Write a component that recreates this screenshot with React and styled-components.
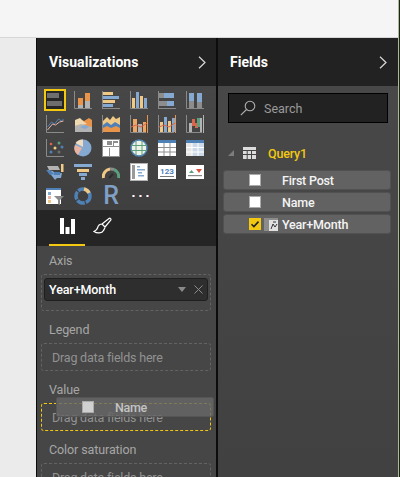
import React from 'react'
import styled, { createGlobalStyle } from 'styled-components'

const Global = createGlobalStyle`
  html, body { margin: 0; padding: 0; background: #ececec; }
  body { width: 400px; height: 477px; overflow: hidden; font-family: Roboto, "Liberation Sans", sans-serif; }
`

const Page = styled.div`
  width: 400px;
  height: 477px;
  display: flex;
  overflow: hidden;
`
const Workspace = styled.div`
  width: 398px;
  flex: none;
  display: flex;
  flex-direction: column;
`
const EdgeStrip = styled.div`
  flex: 1;
  background: #1e241a;
  border-left: 1px solid #a8bb92;
`
const TopBar = styled.div`
  height: 37px;
  flex: none;
  background: #f5f5f5;
  border-bottom: 1px solid #d6d6d6;
`
const Main = styled.div`
  flex: 1;
  display: flex;
  min-height: 0;
`
const LeftGap = styled.div`
  width: 36px;
  flex: none;
  background: #ebebeb;
`
const Pane = styled.section`
  width: ${({ w }) => w}px;
  flex: none;
  display: flex;
  flex-direction: column;
  background: #464646;
  border-left: ${({ edge }) => edge}px solid #0c0c0c;
`
const PaneHeader = styled.header`
  height: 48px;
  flex: none;
  display: flex;
  align-items: center;
  justify-content: space-between;
  padding: 0 ${({ padRight }) => padRight}px 0 12px;
  background: #222222;
  color: #fff;
  font-size: 14px;
  font-weight: 700;
  letter-spacing: 0.05px;
`
const Chevron = styled.svg`
  width: 8px;
  height: 13px;
  fill: none;
  stroke: #d9d9d9;
  stroke-width: 1.2;
`
const Gallery = styled.div`
  height: 124px;
  flex: none;
  display: grid;
  grid-template-columns: repeat(6, 28px);
  grid-auto-rows: 24px;
  padding: 3px 0 0 7px;
  box-sizing: border-box;
  background: linear-gradient(#474747, #3f3f3f);
`
const Cell = styled.div`
  width: 22px;
  height: 22px;
  display: flex;
  align-items: center;
  justify-content: center;
  box-sizing: border-box;
  ${({ active }) => active && 'border: 2px solid #f2c811; background: #262626;'}
`
const Glyph = styled.svg`
  width: 18px;
  height: ${({ h }) => h || 18}px;
  display: block;
`
const TabBar = styled.div`
  height: 36px;
  flex: none;
  display: flex;
  padding-left: 12px;
  background: #252525;
`
const Tab = styled.div`
  width: 36px;
  height: 36px;
  box-sizing: border-box;
  display: flex;
  align-items: center;
  justify-content: center;
  padding-bottom: 3px;
  border-bottom: 2px solid ${({ active }) => (active ? '#f2c811' : 'transparent')};
`
const Wells = styled.div`
  position: relative;
  flex: 1;
  padding: 6px 5px 0 4px;
  min-height: 0;
  overflow: hidden;
`
const WellLabel = styled.div`
  height: 22px;
  line-height: 18px;
  padding-left: 8px;
  font-size: 12.5px;
  letter-spacing: -0.1px;
  color: #a6a6a6;
`
const Well = styled.div`
  height: ${({ h }) => h}px;
  margin-bottom: 10px;
  box-sizing: border-box;
  border: 1px dashed ${({ hot }) => (hot ? '#f2c811' : '#636363')};
  border-radius: 3px;
  display: flex;
  align-items: ${({ pill }) => (pill ? 'flex-start' : 'center')};
  padding: ${({ pill }) => (pill ? '3px 2px 0' : '0 0 0 10px')};
  font-size: 12.5px;
  letter-spacing: -0.2px;
  color: #929292;
`
const Pill = styled.div`
  flex: 1;
  height: 23px;
  box-sizing: border-box;
  display: flex;
  align-items: center;
  justify-content: space-between;
  padding: 0 4px;
  background: #2e2e2e;
  border: 1px solid #1f1f1f;
  border-radius: 3px;
  color: #fff;
  font-size: 12.5px;
  font-weight: 500;
  letter-spacing: -0.1px;
`
const PillTools = styled.div`
  display: flex;
  align-items: center;
  gap: 8px;
`
const Ghost = styled.div`
  position: absolute;
  left: 19px;
  top: 151px;
  width: 158px;
  height: 20px;
  display: flex;
  align-items: center;
  background: rgba(104, 104, 104, 0.82);
  border: 1px solid #555;
  border-radius: 2px;
  box-sizing: border-box;
  padding-left: 25px;
  font-size: 12.5px;
  font-weight: 500;
  letter-spacing: -0.3px;
  color: #c4c4c4;
`
const GhostBox = styled.span`
  width: 12px;
  height: 12px;
  box-sizing: border-box;
  margin-right: 21px;
  background: #d0d0d0;
  border: 1px solid #aaa;
`
const FieldsBody = styled.div`
  flex: 1;
  display: flex;
  flex-direction: column;
  padding: 7px 7px 0 5px;
  background: linear-gradient(#484848, #414141);
`
const SearchBox = styled.div`
  height: 30px;
  width: 160px;
  margin-left: 5px;
  box-sizing: border-box;
  display: flex;
  align-items: center;
  gap: 8px;
  padding-left: 11px;
  background: #222;
  border: 1px solid #000;
  font-size: 12.5px;
  color: #9a9a9a;
`
const TableRow = styled.div`
  height: 20px;
  margin: 20px 0 7px 5px;
  display: flex;
  align-items: center;
  font-size: 12.5px;
  font-weight: 500;
  letter-spacing: -0.2px;
  color: #f2c811;
`
const TableIcon = styled.svg`
  margin: 0 12px 0 9px;
`
const TypeIcon = styled.svg`
  margin-left: 3px;
`
const FieldRow = styled.div`
  height: 20px;
  width: 168px;
  margin-bottom: 2px;
  display: flex;
  align-items: center;
  padding-left: 25px;
  box-sizing: border-box;
  background: #626262;
  border: 1px solid #515151;
  border-radius: 3px;
  font-size: 12.5px;
  font-weight: 500;
  letter-spacing: -0.2px;
  color: #f4f4f4;
`
const Check = styled.span`
  width: 12px;
  height: 12px;
  flex: none;
  display: flex;
  align-items: center;
  justify-content: center;
  box-sizing: border-box;
  background: ${({ on }) => (on ? '#f2c811' : '#fff')};
  border: 1px solid ${({ on }) => (on ? '#f2c811' : '#aaa')};
`
const FieldName = styled.span`
  margin-left: ${({ gap }) => gap}px;
`
const RGlyph = styled.span`
  font-size: 25px;
  line-height: 22px;
  font-weight: 500;
  color: #7f9fc4;
`
const Dots = styled.span`
  display: flex;
  gap: 4px;
  margin-left: 2px;
  i { width: 3px; height: 2px; background: linear-gradient(90deg, #6a8fc0, #fff, #d0605a); }
`

const o = '#e8954b', t = '#f0c987', b = '#85a9d0', g = '#8d8d8d', l = '#b3b3b3', w = '#ffffff', axis = '#8a8a8a'
const red = '#d9654b', teal = '#5d9e7e', blue = '#4f81b7'

const Rects = ({ items }) =>
  items.map(([x, y, wd, h, fill], i) => <rect key={i} x={x} y={y} width={wd} height={h} fill={fill} />)

const Axes = () => <path d="M.5 0v17.5H18" stroke={axis} fill="none" />
const Under = () => <path d="M0 17.500h18" stroke={axis} />
const Combo = ({ c }) => (
  <>
    <path d="M.5 0v17.500H16" stroke={axis} fill="none" />
    <path d="M17.500 0v18" stroke={c} fill="none" />
  </>
)

const drawings = [
  <Rects items={[[1, 2, 12, 5, '#6e6e6e'], [1, 10, 15, 5, '#6e6e6e']]} />,
  <><Axes /><Rects items={[[4, 7, 5, 7, o], [4, 14, 5, 3, l], [11, 2, 5, 8, o], [11, 10, 5, 7, l]]} /></>,
  <><path d="M.5 0v18" stroke={axis} /><Under /><Rects items={[[1, 1, 10, 3, t], [1, 5, 16, 3, b], [1, 9, 12, 3, t], [1, 13, 10, 3, b]]} /></>,
  <><Axes /><Rects items={[[2, 7, 3, 10, t], [6, 1, 3, 16, b], [10, 5, 3, 12, t], [14, 7, 3, 10, b]]} /></>,
  <><path d="M.5 0v18" stroke={axis} /><Under /><Rects items={[[1, 2, 5, 5, g], [6, 2, 10, 5, b], [1, 10, 8, 5, g], [9, 10, 7, 5, b]]} /></>,
  <><Axes /><Rects items={[[3, 2, 5, 8, b], [3, 10, 5, 7, g], [11, 2, 5, 9, b], [11, 11, 5, 6, g]]} /></>,
  <><Axes /><path d="M1.500 12l4-5 3 2 4-5 3 2 2-2" stroke={blue} fill="none" /><path d="M1.500 15l5-6 3 1 4-3 4-1" stroke="#e8b3a3" fill="none" /></>,
  <><path d="M1 8l5-4 4 2 5-3 3 2v12H1z" fill={o} /><path d="M1 5l5-2 3 3 4 3-12 2z" fill="#efd9b0" /><path d="M1 11l6-2 11 3v5H1z" fill={l} /><path d="M6 12l5-2 4 2-4 2z" fill={b} /></>,
  <><path d="M1 6l4-4 3 3 3-4 3 3 4-2v10H1z" fill={t} /><path d="M1 10l4-3 4 3 4-3 5 3v4H1z" fill={blue} /><path d="M1 13l4-2 4 2 5-2 4 2v4H1z" fill={o} /><path d="M.5 0v18" stroke={axis} fill="none" /></>,
  <><Combo c={o} /><Rects items={[[3, 4, 4, 13, '#eda765'], [8, 9, 4, 8, l], [13, 7, 3, 10, '#eda765']]} /><path d="M1 12l5-2 5 2 6-4" stroke={red} fill="none" /></>,
  <><Combo c={o} /><Rects items={[[2, 7, 3, 10, t], [6, 2, 3, 15, b], [10, 6, 3, 11, t], [14, 3, 3, 14, b]]} /><path d="M1 12l5-2 5 2 6-4" stroke={red} fill="none" /></>,
  <><Combo c={l} /><Rects items={[[3, 8, 3, 9, l], [6, 4, 3, 7, red], [9, 8, 3, 5, red], [11, 3, 3, 9, teal], [14, 3, 2, 14, l]]} /></>,
  <><Axes /><circle cx="5" cy="13" r="1.5" fill={blue} /><circle cx="5" cy="5" r="1.300" fill={red} /><circle cx="9" cy="9" r="1.500" fill={t} /><circle cx="13" cy="4" r="1.500" fill={teal} /><circle cx="13" cy="13" r="1.500" fill="#6f6f6f" /><circle cx="16" cy="8" r="1.500" fill={blue} /></>,
  <><circle cx="9" cy="9" r="8.500" fill={b} /><path d="M9 8V.5A8.500 8.500 0 0 0 1.500 4z" fill="#f0dcc0" /><path d="M8 9L1 6A8.500 8.500 0 0 0 4 16z" fill="#e8b3a3" /></>,
  <><rect x=".5" y=".5" width="17" height="17" fill={w} stroke="#8e8e8e" /><Rects items={[[5, 2, 5, 4, '#8e8e8e'], [11, 2, 5, 2, '#8e8e8e'], [1, 7, 16, 1, '#8e8e8e'], [7, 9, 1, 8, '#8e8e8e'], [11, 4, 1, 3, '#8e8e8e']]} /></>,
  <><circle cx="9" cy="9" r="8" fill="#eef3e8" stroke={blue} strokeWidth="1.500" /><path d="M1 6.500h16M1 11.500h16M6 1.500v15M12 1.500v15" stroke={teal} fill="none" /></>,
  <><rect y="1" width="18" height="3" fill={blue} /><rect y="4" width="18" height="13" fill={w} /><path d="M6 4v13M12 4v13M0 8.500h18M0 13h18" stroke="#8e8e8e" /></>,
  <><rect y="1" width="18" height="3" fill={blue} /><rect y="4" width="18" height="13" fill="#ccd9e8" /><rect y="4" width="6" height="13" fill="#e6e6e6" /><path d="M6 4v13M12 4v13M0 8.500h18M0 13h18" stroke={w} /></>,
  <><path d="M1 7l6 1 2 3 7-1-1 5h-4l-2 2-3-4-2-2z" fill={b} /><path d="M1 3h11l2 4H3z" fill={l} /><path d="M0 7l5 1 3 3-4 1z" fill={blue} /><path d="M8 9h6v3H8z" fill={blue} /><rect x="15" y="1" width="2.500" height="8" fill={t} /></>,
  <Rects items={[[0, 1, 18, 3, b], [3, 6, 12, 3, t], [5, 10, 8, 3, b], [7, 14, 4, 3, b]]} />,
  <><path d="M1.500 15A7.500 7.500 0 0 1 8 6" stroke={t} strokeWidth="3" fill="none" /><path d="M8 6a7.500 7.500 0 0 1 4 .5" stroke={g} strokeWidth="3" fill="none" /><path d="M12 6.500a7.500 7.500 0 0 1 4.500 8.500" stroke={teal} strokeWidth="3" fill="none" /><path d="M7 15l4-4" stroke="#2c2c2c" strokeWidth="2" /></>,
  <><rect x=".5" y=".5" width="17" height="17" fill={w} stroke={l} /><Rects items={[[2, 2, 3, 14, '#9a9a9a'], [7, 3, 3, 1.500, b], [7, 6, 8, 1.500, b], [8, 9, 4, 1.500, b], [8, 12, 6, 1.500, b]]} /></>,
]

const extras = [
  <Glyph h={14} viewBox="0 0 18 14">
    <rect width="18" height="14" fill={w} />
    <rect x="2" y="11" width="14" height="1" fill="#777" />
    <text x="9" y="9" textAnchor="middle" fontFamily="Roboto" fontSize="8" fontWeight="700" fill={blue}>123</text>
  </Glyph>,
  <Glyph h={14} viewBox="0 0 18 14">
    <rect width="18" height="14" fill={w} />
    <path d="M3 8l2.500-3L8 8z" fill={teal} /><path d="M10 4h6l-3 4z" fill="#d9503f" /><rect x="2" y="10" width="14" height="1.200" fill="#888" />
  </Glyph>,
  <Glyph viewBox="0 0 18 18">
    <rect y="1" width="15" height="16" fill={w} /><rect y="1" width="15" height="2" fill={blue} />
    <Rects items={[[2, 5, 3, 3, b], [2, 9, 3, 3, '#e8b3a3'], [2, 13, 3, 3, t]]} />
    <path d="M8 9h10l-4 4v5l-2-1v-4z" fill="#8a8a8a" />
  </Glyph>,
  <Glyph viewBox="0 0 18 18">
    <circle cx="9" cy="9" r="7" fill="none" stroke={blue} strokeWidth="3.500" strokeDasharray="8 1.200" />
    <path d="M10 2a7 7 0 0 1 5 4" fill="none" stroke={t} strokeWidth="3.500" />
  </Glyph>,
]

const Arrow = () => (
  <Chevron viewBox="0 0 8 13"><path d="M1 .8L7 6.500 1 12.200" /></Chevron>
)

const Checkmark = () => (
  <svg width="10" height="10" viewBox="0 0 10 10"><path d="M1.500 5.200l2.400 2.400 4.600-5" fill="none" stroke="#222" strokeWidth="1.600" /></svg>
)

const App = () => (
  <Page>
    <Global />
    <Workspace>
      <TopBar />
      <Main>
        <LeftGap />
        <Pane w={179} edge={1}>
          <PaneHeader padRight={10}>
            Visualizations
            <Arrow />
          </PaneHeader>
          <Gallery>
            {drawings.map((d, i) => (
              <Cell key={i} active={i === 0}>
                <Glyph viewBox="0 0 18 18">{d}</Glyph>
              </Cell>
            ))}
            {extras.map((e, i) => <Cell key={i}>{e}</Cell>)}
            <Cell><RGlyph>R</RGlyph></Cell>
            <Cell><Dots><i /><i /><i /></Dots></Cell>
          </Gallery>
          <TabBar>
            <Tab active>
              <svg width="15" height="16" viewBox="0 0 15 16" fill="#fff"><rect width="4" height="16" /><rect x="5.500" y="9" width="4" height="7" /><rect x="11" y="1" width="4" height="15" /></svg>
            </Tab>
            <Tab>
              <svg width="20" height="18" viewBox="0 0 20 18" fill="none" stroke="#fff" strokeWidth="1.200"><path d="M9 7l7-5.500c1-.8 2.500.5 1.700 1.600L12 10zM9 7c-3 0-4 2-4.500 4-.4 1.500-1.500 2.500-3.500 3.500 3 2 8 2 9.500-1 .8-1.500 1.500-2.500 1.500-3.500" /></svg>
            </Tab>
          </TabBar>
          <Wells>
            <WellLabel>Axis</WellLabel>
            <Well h={37} pill>
              <Pill>
                Year+Month
                <PillTools>
                  <svg width="8" height="5" viewBox="0 0 8 5"><path d="M0 0h8L4 5z" fill="#8a8a8a" /></svg>
                  <svg width="9" height="9" viewBox="0 0 9 9"><path d="M.5.500l8 8M8.500.500l-8 8" stroke="#8a8a8a" fill="none" /></svg>
                </PillTools>
              </Pill>
            </Well>
            <WellLabel>Legend</WellLabel>
            <Well h={28}>Drag data fields here</Well>
            <WellLabel>Value</WellLabel>
            <Well h={28} hot>Drag data fields here</Well>
            <WellLabel>Color saturation</WellLabel>
            <Well h={28}>Drag data fields here</Well>
            <Ghost><GhostBox />Name</Ghost>
          </Wells>
        </Pane>
        <Pane w={180} edge={2}>
          <PaneHeader padRight={11}>
            Fields
            <Arrow />
          </PaneHeader>
          <FieldsBody>
            <SearchBox>
              <svg width="16" height="16" viewBox="0 0 16 16" fill="none" stroke="#b0b0b0" strokeWidth="1.100"><circle cx="10" cy="6" r="4.800" /><path d="M6.500 9.500L.8 15.200" /></svg>
              Search
            </SearchBox>
            <TableRow>
              <svg width="6" height="6" viewBox="0 0 6 6"><path d="M6 0v6H0z" fill="#7d7d7d" /></svg>
              <TableIcon width="13" height="12" viewBox="0 0 13 12"><rect width="13" height="12" fill="#dcdcdc" /><path d="M0 3.500h13M0 7.500h13M4.200 3v9M8.500 3v9" stroke="#444" /></TableIcon>
              Query1
            </TableRow>
            <FieldRow><Check /><FieldName gap={21}>First Post</FieldName></FieldRow>
            <FieldRow><Check /><FieldName gap={21}>Name</FieldName></FieldRow>
            <FieldRow>
              <Check on><Checkmark /></Check>
              <TypeIcon width="14" height="13" viewBox="0 0 14 13"><rect width="14" height="13" fill="#8c8c8c" /><rect x="5" y="2" width="9" height="11" fill="#e0e0e0" /><path d="M7 11l2-5 2 3 2-3M9 4h3" stroke="#333" fill="none" /></TypeIcon>
              <FieldName gap={4}>Year+Month</FieldName>
            </FieldRow>
          </FieldsBody>
        </Pane>
      </Main>
    </Workspace>
    <EdgeStrip />
  </Page>
)

export default App
